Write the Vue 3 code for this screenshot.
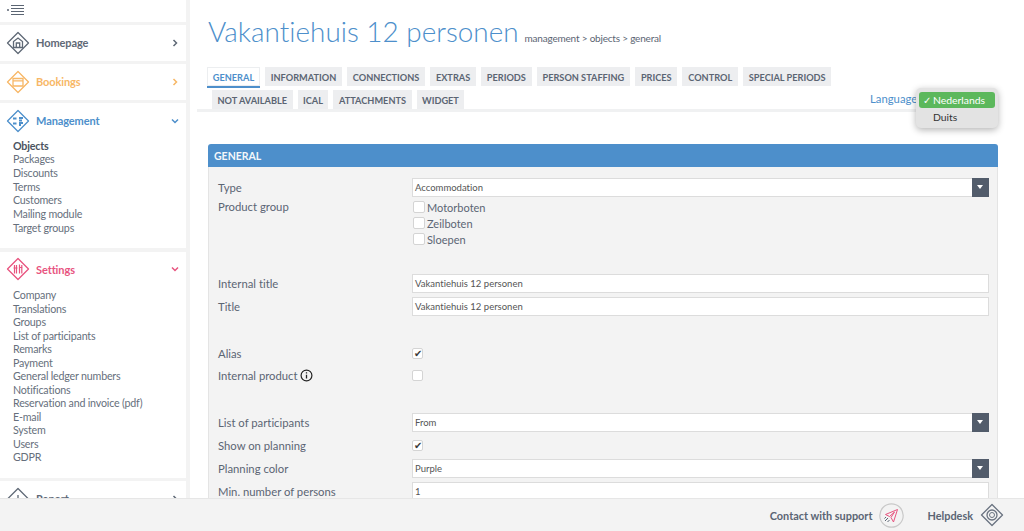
<script setup>
const nav = [
  { key: 'home', label: 'Homepage', cls: 'grey', open: false, items: [] },
  { key: 'book', label: 'Bookings', cls: 'orange', open: false, items: [] },
  { key: 'man', label: 'Management', cls: 'blue', open: true, items: ['Objects', 'Packages', 'Discounts', 'Terms', 'Customers', 'Mailing module', 'Target groups'] },
  { key: 'set', label: 'Settings', cls: 'pink', open: true, items: ['Company', 'Translations', 'Groups', 'List of participants', 'Remarks', 'Payment', 'General ledger numbers', 'Notifications', 'Reservation and invoice (pdf)', 'E-mail', 'System', 'Users', 'GDPR'] },
  { key: 'rep', label: 'Report', cls: 'grey', open: false, items: [] }
]
const tabs1 = ['General', 'Information', 'Connections', 'Extras', 'Periods', 'Person staffing', 'Prices', 'Control', 'Special periods']
const tabs2 = ['Not available', 'iCal', 'Attachments', 'Widget']
</script>

<template>
  <div class="page">
    <div class="upper">
      <aside class="side">
        <div class="burger">
          <svg width="18" height="12" viewBox="0 0 18 12"><circle cx="1" cy="6" r="1" fill="#5b6573"/><path d="M4 1.500h13M4 4.500h13M4 7.500h13M4 10.500h13" stroke="#5b6573" stroke-width="1.200"/></svg>
        </div>
        <section v-for="n in nav" :key="n.key" class="block" :class="[n.cls, n.key]">
          <div class="head">
            <svg class="dia" width="24" height="24" viewBox="0 0 24 24" fill="none" stroke="currentColor" stroke-width="1.300">
              <path d="M12 1.500 22.500 12 12 22.500 1.500 12Z" stroke-linejoin="round"/>
              <path v-if="n.key === 'home'" d="M7.500 16.500v-6L12 7l4.500 3.500v6ZM10.300 16.500v-4.500h3.400v4.500" />
              <path v-else-if="n.key === 'book'" d="M7 8.500h10v7.500H7ZM7 10.800h10" />
              <path v-else-if="n.key === 'man'" d="M7 9.500h3.500M7 14.500h3.500M13 9h4M13 11.500h3M13 14h4M13 16h2" stroke-width="1.800"/>
              <path v-else-if="n.key === 'set'" d="M8.500 8v8.500M10.500 8v8.500M13.500 7.500v9M15.800 8v8.500M7.500 11h4M13 10.500h3.500" stroke-width="1.200"/>
              <path v-else d="M8 16v-5M12 16V8M16 16v-3"/>
            </svg>
            <span class="title">{{ n.label }}</span>
            <svg class="chev" width="8" height="8" viewBox="0 0 8 8" fill="none" stroke="currentColor" stroke-width="1.500">
              <path v-if="n.open" d="M1 2.500 4 5.500 7 2.500"/>
              <path v-else d="M2.500 1 5.500 4 2.500 7"/>
            </svg>
          </div>
          <ul v-if="n.items.length">
            <li v-for="(i, idx) in n.items" :key="i" :class="{ on: n.key === 'man' && idx === 0 }">{{ i }}</li>
          </ul>
        </section>
      </aside>

      <main class="main">
        <header class="top">
          <h1>Vakantiehuis 12 personen</h1>
          <span class="crumb">management &gt; objects &gt; general</span>
        </header>

        <div class="tabs">
          <div class="tabrow first">
            <span v-for="(t, i) in tabs1" :key="t" class="tab" :class="{ active: i === 0 }">{{ t }}</span>
          </div>
          <div class="tabrow second">
            <span v-for="t in tabs2" :key="t" class="tab">{{ t }}</span>
          </div>
          <span class="lang">Language</span>
          <div class="menu">
            <div class="opt sel"><span class="tick">✓</span>Nederlands</div>
            <div class="opt">Duits</div>
          </div>
        </div>

        <div class="panel">
          <div class="phead">GENERAL</div>
          <div class="pbody">
            <div class="row"><label>Type</label><div class="select"><span>Accommodation</span><i></i></div></div>
            <div class="row group">
              <label>Product group</label>
              <div class="checks">
                <div class="ck"><b class="box"></b>Motorboten</div>
                <div class="ck"><b class="box"></b>Zeilboten</div>
                <div class="ck"><b class="box"></b>Sloepen</div>
              </div>
            </div>
            <div class="row"><label>Internal title</label><div class="input">Vakantiehuis 12 personen</div></div>
            <div class="row"><label>Title</label><div class="input">Vakantiehuis 12 personen</div></div>
            <div class="row spaced"><label>Alias</label><b class="box tickbox">✔</b></div>
            <div class="row tight">
              <label>Internal product
                <svg width="13" height="13" viewBox="0 0 12 12" fill="none" stroke="#222" class="info"><circle cx="6" cy="6" r="5" stroke-width="1.100"/><path d="M6 5.200v3.600M6 3v1.200" stroke-width="1.200"/></svg>
              </label>
              <b class="box"></b>
            </div>
            <div class="row spaced"><label>List of participants</label><div class="select"><span>From</span><i></i></div></div>
            <div class="row"><label>Show on planning</label><b class="box tickbox">✔</b></div>
            <div class="row"><label>Planning color</label><div class="select"><span>Purple</span><i></i></div></div>
            <div class="row"><label>Min. number of persons</label><div class="input">1</div></div>
          </div>
        </div>
      </main>
    </div>

    <footer class="foot">
      <span class="flabel">Contact with support</span>
      <svg class="ficon" width="25" height="25" viewBox="0 0 25 25" fill="none">
        <circle cx="12.500" cy="12.500" r="11.700" stroke="#c9c9c9" stroke-width="1.200"/>
        <path d="M18.500 6.500 6.500 11.500l4 2 5 -4.500-3.500 5.500 2.500 4.500Z" stroke="#e8547f" stroke-width="1" stroke-linejoin="round"/>
        <path d="M6 18l3-3M8.500 19l2-2M5.500 15.500l1.500-1.500" stroke="#5b6573" stroke-width="1"/>
      </svg>
      <span class="flabel help">Helpdesk</span>
      <svg class="ficon last" width="24" height="24" viewBox="0 0 24 24" fill="none" stroke="#6a7380">
        <path d="M12 1.500 22.500 12 12 22.500 1.500 12Z" stroke-width="1.300" stroke-linejoin="round"/>
        <circle cx="12" cy="12" r="5" stroke-width="1.300"/><circle cx="12" cy="12" r="2.500" stroke-width="1"/>
      </svg>
    </footer>
  </div>
</template>

<style>
html, body { margin: 0; background: #fff; }
</style>

<style scoped>
.page {
  width: 1024px; height: 531px; overflow: hidden;
  display: flex; flex-direction: column;
  font-family: "Lato", "Noto Sans", sans-serif; color: #5b6573;
  font-variant-ligatures: none;
}
.upper { flex: 1; min-height: 0; overflow: hidden; display: flex; }
.side {
  width: 186px; flex: none; padding-right: 4px; background: #f3f3f3;
  display: flex; flex-direction: column; gap: 3.500px;
}
.burger { height: 21.500px; flex: none; background: #fff; display: flex; align-items: center; padding-left: 7px; padding-bottom: 2px; box-sizing: border-box; }
.block { background: #fff; flex: none; }
.block.home, .block.book { height: 35.500px; }
.block.man { height: 145px; }
.block.set { height: 226px; }
.block.rep { height: 40px; }
.head { height: 35.500px; display: flex; align-items: center; padding-left: 6px; }
.head .dia { flex: none; }
.head .title { margin-left: 6px; font-size: 11px; font-weight: 700; letter-spacing: -.1px; flex: 1; }
.chev { margin-right: 7px; }
.grey .title, .grey .dia, .grey .chev { color: #5f6976; }
.orange .title, .orange .dia, .orange .chev { color: #f7b766; }
.blue .title, .blue .dia, .blue .chev { color: #4d8fcb; }
.pink .title, .pink .dia, .pink .chev { color: #e8547f; }
ul { list-style: none; margin: 0; padding: 0 0 0 13px; }
li { font-size: 10.700px; letter-spacing: -.2px; line-height: 13.500px; color: #666f7c; white-space: nowrap; }
li.on { font-weight: 700; color: #4a5360; }
.block.man li { line-height: 13.700px; }
.block.set ul { margin-top: 1px; }

.main { flex: 1; min-width: 0; padding: 0 26px 0 7px; }
.top { height: 67px; display: flex; align-items: baseline; padding: 13px 0 0 11px; box-sizing: border-box; }
h1 { margin: 0; font-size: 27.900px; font-weight: 300; color: #4d8fcb; line-height: 36px; white-space: nowrap; }
.crumb { margin-left: 6px; font-size: 10px; letter-spacing: -.2px; color: #5b6573; white-space: nowrap; }

.tabs { position: relative; height: 45px; box-sizing: border-box; border-bottom: 3px solid #f0f1f2; }
.tabrow { display: flex; gap: 5px; height: 19px; }
.tabrow.first { padding-left: 10px; margin-bottom: 4px; }
.tabrow.second { padding-left: 15px; }
.tab {
  background: #edeef0; color: #5b6573; font-size: 9.200px; font-weight: 700;
  text-transform: uppercase; padding: 0 5.500px; line-height: 21px; white-space: nowrap;
}
.tabrow.first .tab { padding: 0 5.800px; }
.tab.active { background: #fff; color: #4d8fcb; box-shadow: inset 0 0 0 1px #eceef0; border-bottom: 2px solid #4d8fcb; height: 19px; }
.lang { position: absolute; left: 673px; top: 23px; font-size: 11.300px; color: #4d8fcb; line-height: 18px; }
.menu {
  position: absolute; left: 719px; top: 21px; width: 82px; height: 40px; box-sizing: border-box;
  background: #e3e3e3; border-radius: 5px; padding: 4px 3px; box-shadow: 0 2px 7px rgba(0,0,0,.3); z-index: 3;
}
.opt { height: 16px; line-height: 16px; font-size: 10.400px; color: #333; padding-left: 14px; position: relative; }
.opt.sel { background: #5cb85c; color: #fff; border-radius: 3px; margin-bottom: 1px; }
.tick { position: absolute; left: 4px; top: 0; }

.panel { margin: 32px 0 0 11px; width: 790px; }
.phead {
  height: 23px; background: #4d8fcb; color: #f4f7fa; font-size: 10.500px; font-weight: 700;
  line-height: 24px; padding-left: 6px; border-radius: 3px 3px 0 0;
}
.pbody { background: #f3f3f3; border: 1px solid #e4e4e4; border-top: 0; padding: 9px 9px 40px; }
.row { display: flex; align-items: center; height: 23px; }
.row label { width: 194px; flex: none; font-size: 11.300px; color: #5b6573; white-space: nowrap; }
.row.spaced { margin-top: 24px; }
.row.tight { margin-top: -1px; }
.row.group { height: 66px; margin-bottom: 9px; align-items: flex-start; margin-top: -2px; }
.row.group label { margin-top: 3px; }
.info { vertical-align: -2px; }
.select, .input {
  width: 577px; height: 19px; box-sizing: border-box; background: #fff; border: 1px solid #dcdcdc;
  font-size: 9.500px; color: #555; line-height: 17px; padding-left: 2px; position: relative; flex: none;
}
.select i { position: absolute; right: -1px; top: -1px; width: 17px; height: 19px; background: #525c6b; }
.select i::after {
  content: ""; position: absolute; left: 5px; top: 7px;
  border: 3.500px solid transparent; border-top: 4px solid #fff; border-bottom: 0;
}
.box {
  display: inline-block; width: 11px; height: 11px; box-sizing: border-box; flex: none;
  background: #fff; border: 1px solid #d4d4d4; border-radius: 2px;
}
.tickbox { font-size: 10px; line-height: 9px; text-align: center; color: #3a3a3a; font-weight: 400; overflow: visible; }
.checks { padding-top: 2px; }
.ck { display: flex; align-items: center; height: 16px; font-size: 11px; color: #5b6573; }
.ck .box { margin: 0 2px 0 1px; width: 12px; height: 12px; }

.foot {
  height: 33px; flex: none; background: #f3f3f3; border-top: 1px solid #e6e6e6; box-sizing: border-box;
  display: flex; align-items: center; justify-content: flex-end; padding-right: 20px;
}
.flabel { font-size: 10.900px; font-weight: 700; color: #5b6573; white-space: nowrap; }
.ficon { margin-left: 7px; }
.help { margin-left: 23px; }
</style>
